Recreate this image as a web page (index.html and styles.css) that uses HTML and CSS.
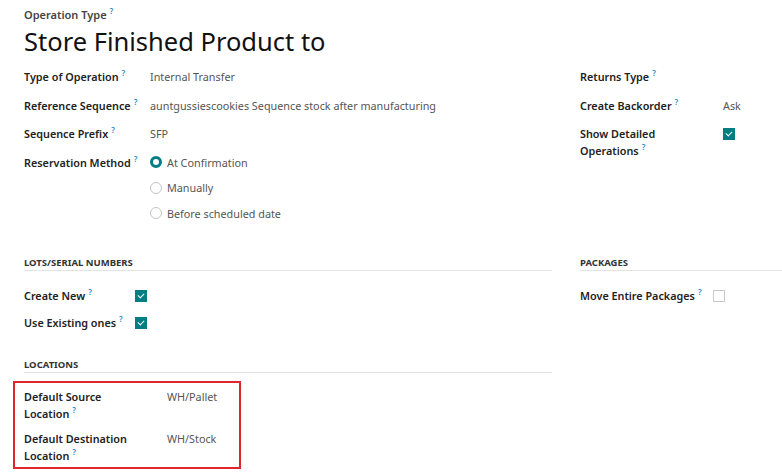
FILE: index.html
```html
<!DOCTYPE html>
<html lang="en">
<head>
    <meta charset="UTF-8">
    <title>Operation Type</title>
    <link rel="stylesheet" href="styles.css">
</head>
<body>
    <div class="sheet">
        <div class="title-block">
            <div class="title-label">Operation Type<sup>?</sup></div>
            <h1>Store Finished Product to</h1>
        </div>

        <div class="row">
            <div class="col-left">
                <div class="fields main-fields">
                    <div class="label">Type of Operation<sup>?</sup></div>
                    <div class="value">Internal Transfer</div>

                    <div class="label">Reference Sequence<sup>?</sup></div>
                    <div class="value">auntgussiescookies Sequence stock after manufacturing</div>

                    <div class="label">Sequence Prefix<sup>?</sup></div>
                    <div class="value">SFP</div>

                    <div class="label">Reservation Method<sup>?</sup></div>
                    <div class="value radios">
                        <div class="radio"><span class="dot checked"></span>At Confirmation</div>
                        <div class="radio"><span class="dot"></span>Manually</div>
                        <div class="radio"><span class="dot"></span>Before scheduled date</div>
                    </div>
                </div>
            </div>
            <div class="col-right">
                <div class="fields side-fields">
                    <div class="label">Returns Type<sup>?</sup></div>
                    <div class="value"></div>

                    <div class="label">Create Backorder<sup>?</sup></div>
                    <div class="value">Ask</div>

                    <div class="label">Show Detailed Operations<sup>?</sup></div>
                    <div class="value"><span class="check on"></span></div>
                </div>
            </div>
        </div>

        <div class="row sections">
            <div class="col-left">
                <div class="section-title">Lots/Serial Numbers</div>
                <div class="fields lot-fields">
                    <div class="label">Create New<sup>?</sup></div>
                    <div class="value"><span class="check on"></span></div>

                    <div class="label">Use Existing ones<sup>?</sup></div>
                    <div class="value"><span class="check on"></span></div>
                </div>

                <div class="section-title locations-title">Locations</div>
                <div class="highlight">
                    <div class="fields loc-fields">
                        <div class="label">Default Source Location<sup>?</sup></div>
                        <div class="value">WH/Pallet</div>

                        <div class="label">Default Destination Location<sup>?</sup></div>
                        <div class="value">WH/Stock</div>
                    </div>
                </div>
            </div>
            <div class="col-right">
                <div class="section-title">Packages</div>
                <div class="fields pack-fields">
                    <div class="label">Move Entire Packages<sup>?</sup></div>
                    <div class="value"><span class="check"></span></div>
                </div>
            </div>
        </div>
    </div>
</body>
</html>
```

FILE: styles.css
```css
body {
    margin: 0;
    font-family: "Noto Sans", "Open Sans", sans-serif;
    font-size: 10.8px;
    color: #374151;
    background: #fff;
}
.sheet {
    padding: 6px 0 0 24px;
}
sup {
    color: #1e88c8;
    font-size: 8px;
    font-weight: 600;
    margin-left: 3px;
    vertical-align: top;
    line-height: 10px;
}
.title-label {
    font-size: 11px;
    font-weight: 600;
    color: #444;
    line-height: 18px;
}
h1 {
    margin: 0;
    font-size: 25.5px;
    font-weight: 400;
    color: #111;
    line-height: 34px;
}
.row {
    display: flex;
    gap: 28px;
}
.col-left {
    width: 528px;
}
.col-right {
    flex: 1;
}
.fields {
    display: grid;
    align-items: start;
}
.label {
    font-weight: 600;
    color: #222;
    line-height: 17px;
}
.value {
    color: #555;
    line-height: 17px;
}
.main-fields {
    grid-template-columns: 126px 1fr;
    row-gap: 11.5px;
    margin-top: 10px;
}
.side-fields {
    grid-template-columns: 143px 1fr;
    row-gap: 11.5px;
    margin-top: 10px;
}
.side-fields .label {
    width: 110px;
}
.radios {
    display: flex;
    flex-direction: column;
    gap: 8.5px;
}
.radio {
    display: flex;
    align-items: center;
}
.dot {
    width: 10px;
    height: 10px;
    border: 1px solid #c4c4c4;
    border-radius: 50%;
    margin-right: 5px;
    box-sizing: content-box;
}
.dot.checked {
    width: 6px;
    height: 6px;
    border: 3px solid #017e84;
}
.check {
    display: inline-block;
    width: 10px;
    height: 10px;
    border: 1px solid #c8c8c8;
    margin-top: 3px;
    position: relative;
}
.check.on {
    background: #017e84;
    border-color: #017e84;
}
.check.on::after {
    content: "";
    position: absolute;
    left: 3px;
    top: 1px;
    width: 3px;
    height: 5px;
    border: solid #fff;
    border-width: 0 1.5px 1.5px 0;
    transform: rotate(45deg);
}
.sections {
    margin-top: 34px;
}
.section-title {
    font-size: 9.5px;
    font-weight: 700;
    text-transform: uppercase;
    color: #333;
    line-height: 14px;
    border-bottom: 1px solid #e3e3e3;
}
.lot-fields {
    grid-template-columns: 111px 1fr;
    row-gap: 8px;
    margin-top: 16px;
}
.pack-fields {
    grid-template-columns: 133px 1fr;
    margin-top: 16px;
}
.locations-title {
    margin-top: 25px;
}
.highlight {
    margin: 8px 0 0 -11px;
    width: 215px;
    border: 2px solid #e0262d;
    padding: 5px 0 3px 9px;
}
.loc-fields {
    grid-template-columns: 143px 1fr;
    row-gap: 8px;
}
.loc-fields .label {
    width: 125px;
}
```
